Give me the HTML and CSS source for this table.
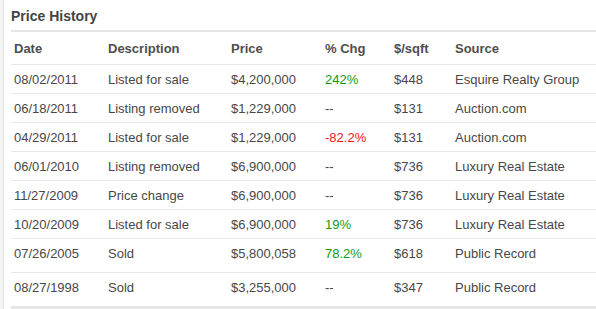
FILE: index.html
```html
<!DOCTYPE html>
<html>
<head>
<meta charset="utf-8">
<link rel="stylesheet" href="styles.css">
</head>
<body>
<div class="page">
  <div class="panel">
    <h2 class="title">Price History</h2>
    <table class="history">
      <colgroup>
        <col class="c-date"><col class="c-desc"><col class="c-price"><col class="c-chg"><col class="c-sqft"><col class="c-src">
      </colgroup>
      <thead>
        <tr><th>Date</th><th>Description</th><th>Price</th><th>% Chg</th><th>$/sqft</th><th>Source</th></tr>
      </thead>
      <tbody>
        <tr><td>08/02/2011</td><td>Listed for sale</td><td>$4,200,000</td><td class="up">242%</td><td>$448</td><td>Esquire Realty Group</td></tr>
        <tr><td>06/18/2011</td><td>Listing removed</td><td>$1,229,000</td><td>--</td><td>$131</td><td>Auction.com</td></tr>
        <tr><td>04/29/2011</td><td>Listed for sale</td><td>$1,229,000</td><td class="down">-82.2%</td><td>$131</td><td>Auction.com</td></tr>
        <tr><td>06/01/2010</td><td>Listing removed</td><td>$6,900,000</td><td>--</td><td>$736</td><td>Luxury Real Estate</td></tr>
        <tr><td>11/27/2009</td><td>Price change</td><td>$6,900,000</td><td>--</td><td>$736</td><td>Luxury Real Estate</td></tr>
        <tr><td>10/20/2009</td><td>Listed for sale</td><td>$6,900,000</td><td class="up">19%</td><td>$736</td><td>Luxury Real Estate</td></tr>
        <tr class="tall"><td>07/26/2005</td><td>Sold</td><td>$5,800,058</td><td class="up">78.2%</td><td>$618</td><td>Public Record</td></tr>
        <tr class="tall last"><td>08/27/1998</td><td>Sold</td><td>$3,255,000</td><td>--</td><td>$347</td><td>Public Record</td></tr>
      </tbody>
    </table>
  </div>
</div>
</body>
</html>
```
FILE: styles.css
```css
html, body {
  margin: 0;
  padding: 0;
  background: #fff;
}
body {
  font-family: "Liberation Sans", Arial, sans-serif;
  color: #474747;
  font-size: 13px;
}
.page {
  border-left: 3px solid #f4f4f6;
  height: 309px;
  box-sizing: border-box;
}
.panel {
  border-left: 1px solid #e2e2e2;
  padding-left: 7px;
  height: 309px;
  box-sizing: border-box;
}
.title {
  margin: 0;
  padding-top: 7px;
  height: 23px;
  font-size: 14px;
  line-height: 18px;
  font-weight: bold;
  color: #444;
  border-bottom: 2px solid #e6e6e6;
}
.history {
  width: 585px;
  border-collapse: collapse;
  table-layout: fixed;
}
.c-date { width: 94px; }
.c-desc { width: 123px; }
.c-price { width: 94px; }
.c-chg { width: 69px; }
.c-sqft { width: 61px; }
.c-src { width: auto; }
.history th,
.history td {
  padding: 0 0 0 3px;
  text-align: left;
  white-space: nowrap;
  border-bottom: 1px solid #e8e8e8;
}
.history th {
  height: 32px;
  font-weight: bold;
  color: #4e4e4e;
}
.history td {
  height: 28px;
}
.history tr.tall td {
  height: 29px;
  padding-bottom: 4px;
}
.history tr.last td {
  border-bottom: 3px solid #e6e6e6;
}
.up { color: #129a12; }
.down { color: #f0141e; }
```
